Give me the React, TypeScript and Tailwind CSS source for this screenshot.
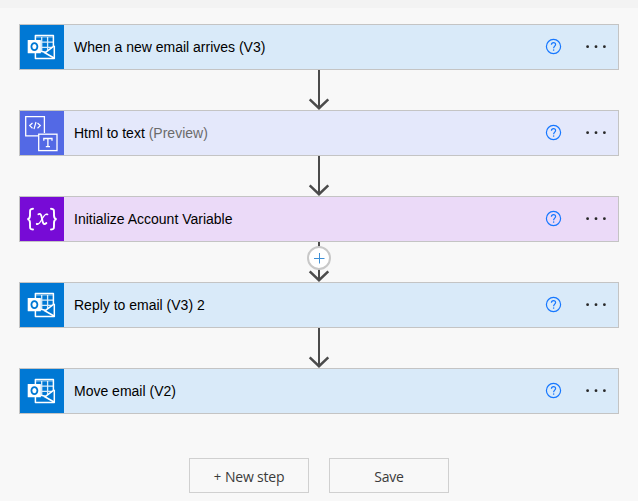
import React from "react";

type Kind = "outlook" | "html" | "variable";

function OutlookIcon() {
  return (
    <svg width="44" height="44" viewBox="0 0 44 44" fill="none" stroke="#fff">
      <path d="M15.4 15V10.5H33.4V21M15.4 28V33.4H34.3V20.8" strokeWidth="1.5" strokeLinejoin="round" />
      <path d="M15.4 12H33.4" strokeWidth="1" opacity=".6" />
      <path d="M21 17.2H33M21 22.3H32M21.7 12V26M27.6 12V25.5" strokeWidth="1.3" opacity=".85" />
      <path d="M34.2 20.8L25.8 27.2L20.5 26.3M23.5 27L34 33" strokeWidth="1.5" />
      <rect x="7.7" y="15" width="13.2" height="13.2" rx=".5" fill="#fff" stroke="none" />
      <ellipse cx="14.4" cy="21.6" rx="3" ry="3.5" stroke="#0078d4" strokeWidth="1.8" />
    </svg>
  );
}

function HtmlIcon() {
  return (
    <svg width="44" height="44" viewBox="0 0 44 44" fill="none" stroke="#fff" strokeWidth="1.3">
      <path d="M18 24.9H5.7V5.7H24.4V22" />
      <rect x="18.7" y="23.2" width="18.3" height="16.4" />
      <path d="M12.5 12L9.7 14.6L12.5 17.2M17.5 12L20.3 14.6L17.5 17.2M16 11L14 18.2" strokeWidth="1.2" />
      <path d="M23.8 29.8V27.5H32V29.8M27.9 27.5V35.6M25.8 35.6H30" strokeWidth="1.3" />
    </svg>
  );
}

function VariableIcon() {
  return (
    <svg width="44" height="44" viewBox="0 0 44 44" fill="none" stroke="#fff" strokeLinecap="round">
      <path d="M13 11.7C10 11.7 10 13.2 10 16V18.5C10 21 9.2 21.9 7.4 22.1C9.2 22.3 10 23.3 10 26V28.5C10 31.2 10 32.5 13 32.5M31 11.7C34 11.7 34 13.2 34 16V18.5C34 21 34.8 21.9 36.6 22.1C34.8 22.3 34 23.3 34 26V28.5C34 31.2 34 32.5 31 32.5" strokeWidth="1.9" />
      <path d="M18.4 17.3C20.8 16 21.4 18.2 22 21.5C22.7 25.9 23.4 28.6 26.4 26" strokeWidth="1.8" />
      <path d="M27.4 17.3C25.3 16.3 23.9 18.8 22.2 21.8C20.2 25.4 18.6 28.2 16.5 27.1" strokeWidth="1.2" />
      <circle cx="27.1" cy="17.5" r=".6" fill="#fff" />
      <circle cx="16.9" cy="26.9" r=".6" fill="#fff" />
    </svg>
  );
}

const styles: Record<Kind, { icon: string; body: string; art: () => React.JSX.Element }> = {
  outlook: { icon: "bg-[#0078d4]", body: "bg-[#d9eaf9]", art: OutlookIcon },
  html: { icon: "bg-[#5369e5]", body: "bg-[#e4e8fb]", art: HtmlIcon },
  variable: { icon: "bg-[#770bd6]", body: "bg-[#ebdaf8]", art: VariableIcon },
};

function Step({ kind, title, note }: { kind: Kind; title: string; note?: string }) {
  const s = styles[kind];
  const Art = s.art;
  return (
    <div className={`flex h-[46px] w-[600px] shrink-0 items-center border border-[#c4c4c4] ${s.body}`}>
      <div className={`size-11 shrink-0 ${s.icon}`}>
        <Art />
      </div>
      <div className="flex-1 whitespace-pre pl-2.5 text-sm text-black">
        {title}
        {note && <span className="text-[#6b6b6b]"> {note}</span>}
      </div>
      <button aria-label="Help" className="mr-[22px]">
        <svg width="18" height="18" viewBox="0 0 18 18" fill="none" stroke="#1677ff">
          <circle cx="9.5" cy="8.5" r="7.1" strokeWidth="1.2" />
          <path d="M7.4 6.7C7.4 5.3 8.2 4.6 9.5 4.6S11.6 5.4 11.6 6.5C11.6 8 9.6 8.2 9.6 10.2" strokeWidth="1.2" />
          <path d="M9.6 11.4V12.7" strokeWidth="1.3" />
        </svg>
      </button>
      <button aria-label="More" className="mr-2.5">
        <svg width="24" height="8" viewBox="0 0 24 8" fill="#282828">
          <circle cx="3.6" cy="3.7" r="1.4" />
          <circle cx="12" cy="3.7" r="1.4" />
          <circle cx="20.4" cy="3.7" r="1.4" />
        </svg>
      </button>
    </div>
  );
}

function Arrow({ add }: { add?: boolean }) {
  return (
    <div className="relative h-10 w-6 shrink-0">
      <svg width="24" height="40" viewBox="0 0 24 40" fill="none" stroke="#4b4b4b" strokeWidth="2">
        <path d="M12 0V38" />
        <path d="M2.7 29.3L12 38.2L21.3 29.3" strokeWidth="2.5" />
      </svg>
      {add && (
        <button aria-label="Insert a step" className="absolute left-0 top-1 flex size-6 items-center justify-center rounded-full border-2 border-[#c8c8c8] bg-white">
          <svg width="12" height="12" viewBox="0 0 12 12" stroke="#3d8fd6">
            <path d="M1 6.5H11.5M6.5 1V11.5" strokeWidth="1" />
          </svg>
        </button>
      )}
    </div>
  );
}

function ActionButton({ children }: { children: React.ReactNode }) {
  return (
    <button className="flex h-[35px] w-[120px] items-center justify-center gap-1 border border-[#d0d0d0] pt-0.5 font-['Open_Sans',sans-serif] text-sm tracking-[-0.2px] text-[#3b3b3b]">
      {children}
    </button>
  );
}

export default function App() {
  return (
    <main className="h-[501px] w-[638px] overflow-hidden border-t-8 border-[#f3f3f3] bg-[#f8f8f8] font-['Liberation_Sans',Arial,sans-serif]">
      <div className="flex flex-col items-center pt-4">
        <Step kind="outlook" title="When a new email arrives (V3)" />
        <Arrow />
        <Step kind="html" title="Html to text" note="(Preview)" />
        <Arrow />
        <Step kind="variable" title="Initialize Account Variable" />
        <Arrow add />
        <Step kind="outlook" title="Reply to email (V3) 2" />
        <Arrow />
        <Step kind="outlook" title="Move email (V2)" />
      </div>
      <div className="mt-11 flex justify-center gap-5">
        <ActionButton>
          <span className="text-[13px]">+</span>
          <span>New step</span>
        </ActionButton>
        <ActionButton>Save</ActionButton>
      </div>
    </main>
  );
}
